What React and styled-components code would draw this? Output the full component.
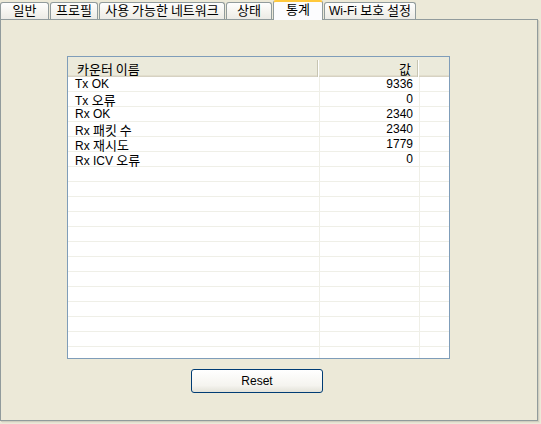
import React from "react";
import styled, { createGlobalStyle } from "styled-components";

const Global = createGlobalStyle`
  html, body { margin: 0; padding: 0; background: #ECE9D8; }
  body { font-family: "Liberation Sans", "Noto Sans CJK KR", sans-serif; font-size: 12px; color: #000; }
`;

const Window = styled.div`
  width: 541px;
  height: 424px;
  background: #ECE9D8;
  display: flex;
  flex-direction: column;
  overflow: hidden;
`;

const TabStrip = styled.div`
  display: flex;
  align-items: flex-end;
  height: 19px;
  position: relative;
  z-index: 2;
`;

const Tab = styled.div`
  box-sizing: border-box;
  width: ${(p) => p.$w}px;
  height: ${(p) => (p.$active ? 20 : 17)}px;
  margin-right: 1px;
  margin-bottom: ${(p) => (p.$active ? -1 : 0)}px;
  border: 1px solid #919B9C;
  border-bottom: none;
  border-radius: 3px 3px 0 0;
  background: ${(p) =>
    p.$active ? "#FCFCFE" : "linear-gradient(#FEFEFE, #F4F3EE 60%, #ECEBE6)"};
  border-top: ${(p) => (p.$active ? "2px solid #FFC83C" : "1px solid #919B9C")};
  text-align: center;
  line-height: ${(p) => (p.$active ? 16 : 16)}px;
  font-size: 12px;
  white-space: nowrap;
`;

const Ko = styled.span`
  font-family: "Noto Sans CJK KR", sans-serif;
  font-size: 13px;
  line-height: 13px;
`;

const Panel = styled.div`
  box-sizing: border-box;
  flex: 1;
  margin: 0 3px 3px 0;
  border: 1px solid #919B9C;
  background: #ECE9D8;
  box-shadow: 1px 1px 0 #D0CEBF, 2px 2px 0 #E3E0D0;
  display: flex;
  flex-direction: column;
  align-items: flex-start;
  padding: 36px 0 0 66px;
`;

const List = styled.div`
  box-sizing: border-box;
  width: 383px;
  height: 303px;
  border: 1px solid #7F9DB9;
  background: #FFFFFF;
  overflow: hidden;
  display: flex;
  flex-direction: column;
`;

const Header = styled.div`
  display: grid;
  grid-template-columns: 250px 100px 31px;
  height: 20px;
  flex-shrink: 0;
  background: #EBEADB;
  box-shadow: inset 0 -1px 0 #D6D2C2, inset 0 -2px 0 #E2DECD;
`;

const HeadCell = styled.div`
  box-sizing: border-box;
  padding: 2px ${(p) => (p.$right ? 6 : 0)}px 0 ${(p) => (p.$right ? 0 : 9)}px;
  text-align: ${(p) => (p.$right ? "right" : "left")};
  border-right: ${(p) => (p.$last ? "none" : "1px solid #C7C5B2")};
  box-shadow: ${(p) => (p.$last ? "none" : "1px 0 0 #FFFFFF")};
  margin: 3px 0 4px;
  line-height: 13px;
  white-space: nowrap;
`;

const Row = styled.div`
  display: grid;
  grid-template-columns: 252px 100px 29px;
  height: 15px;
  flex-shrink: 0;
  box-sizing: border-box;
  border-bottom: 1px solid #EFEFE7;
`;

const Cell = styled.div`
  box-sizing: border-box;
  padding: 1px ${(p) => (p.$right ? 6 : 0)}px 0 ${(p) => (p.$right ? 0 : 7)}px;
  text-align: ${(p) => (p.$right ? "right" : "left")};
  line-height: 13px;
  height: 14px;
  border-right: ${(p) => (p.$last ? "none" : "1px solid #EFEFE7")};
  white-space: nowrap;
`;

const Button = styled.button`
  box-sizing: border-box;
  margin: 10px 0 0 124px;
  width: 132px;
  height: 24px;
  border: 1px solid #003C74;
  border-radius: 3px;
  background: linear-gradient(#FFFFFF, #F5F4EF 70%, #E3E2D9);
  font-family: "Liberation Sans", sans-serif;
  font-size: 12px;
  color: #000;
  padding: 0;
`;

const tabs = [
  { parts: ["", "일반"], w: 49 },
  { parts: ["", "프로필"], w: 48 },
  { parts: ["", "사용 가능한 네트워크"], w: 126 },
  { parts: ["", "상태"], w: 46 },
  { parts: ["", "통계"], w: 50, active: true },
  { parts: ["Wi-Fi ", "보호 설정"], w: 92 },
];

const data = [
  ["Tx OK", "", "9336"],
  ["Tx ", "오류", "0"],
  ["Rx OK", "", "2340"],
  ["Rx ", "패킷 수", "2340"],
  ["Rx ", "재시도", "1779"],
  ["Rx ICV ", "오류", "0"],
];

function Label({ latin, ko }) {
  return (
    <>
      {latin}
      {ko && <Ko>{ko}</Ko>}
    </>
  );
}

export default function App() {
  const rows = [...data];
  while (rows.length < 19) rows.push(["", "", ""]);
  return (
    <Window>
      <Global />
      <TabStrip>
        {tabs.map((t, i) => (
          <Tab key={i} $w={t.w} $active={t.active}>
            <Label latin={t.parts[0]} ko={t.parts[1]} />
          </Tab>
        ))}
      </TabStrip>
      <Panel>
        <List>
          <Header>
            <HeadCell>
              <Ko>카운터 이름</Ko>
            </HeadCell>
            <HeadCell $right>
              <Ko>값</Ko>
            </HeadCell>
            <HeadCell $last />
          </Header>
          {rows.map((r, i) => (
            <Row key={i}>
              <Cell>
                <Label latin={r[0]} ko={r[1]} />
              </Cell>
              <Cell $right>{r[2]}</Cell>
              <Cell $last />
            </Row>
          ))}
        </List>
        <Button>Reset</Button>
      </Panel>
    </Window>
  );
}
